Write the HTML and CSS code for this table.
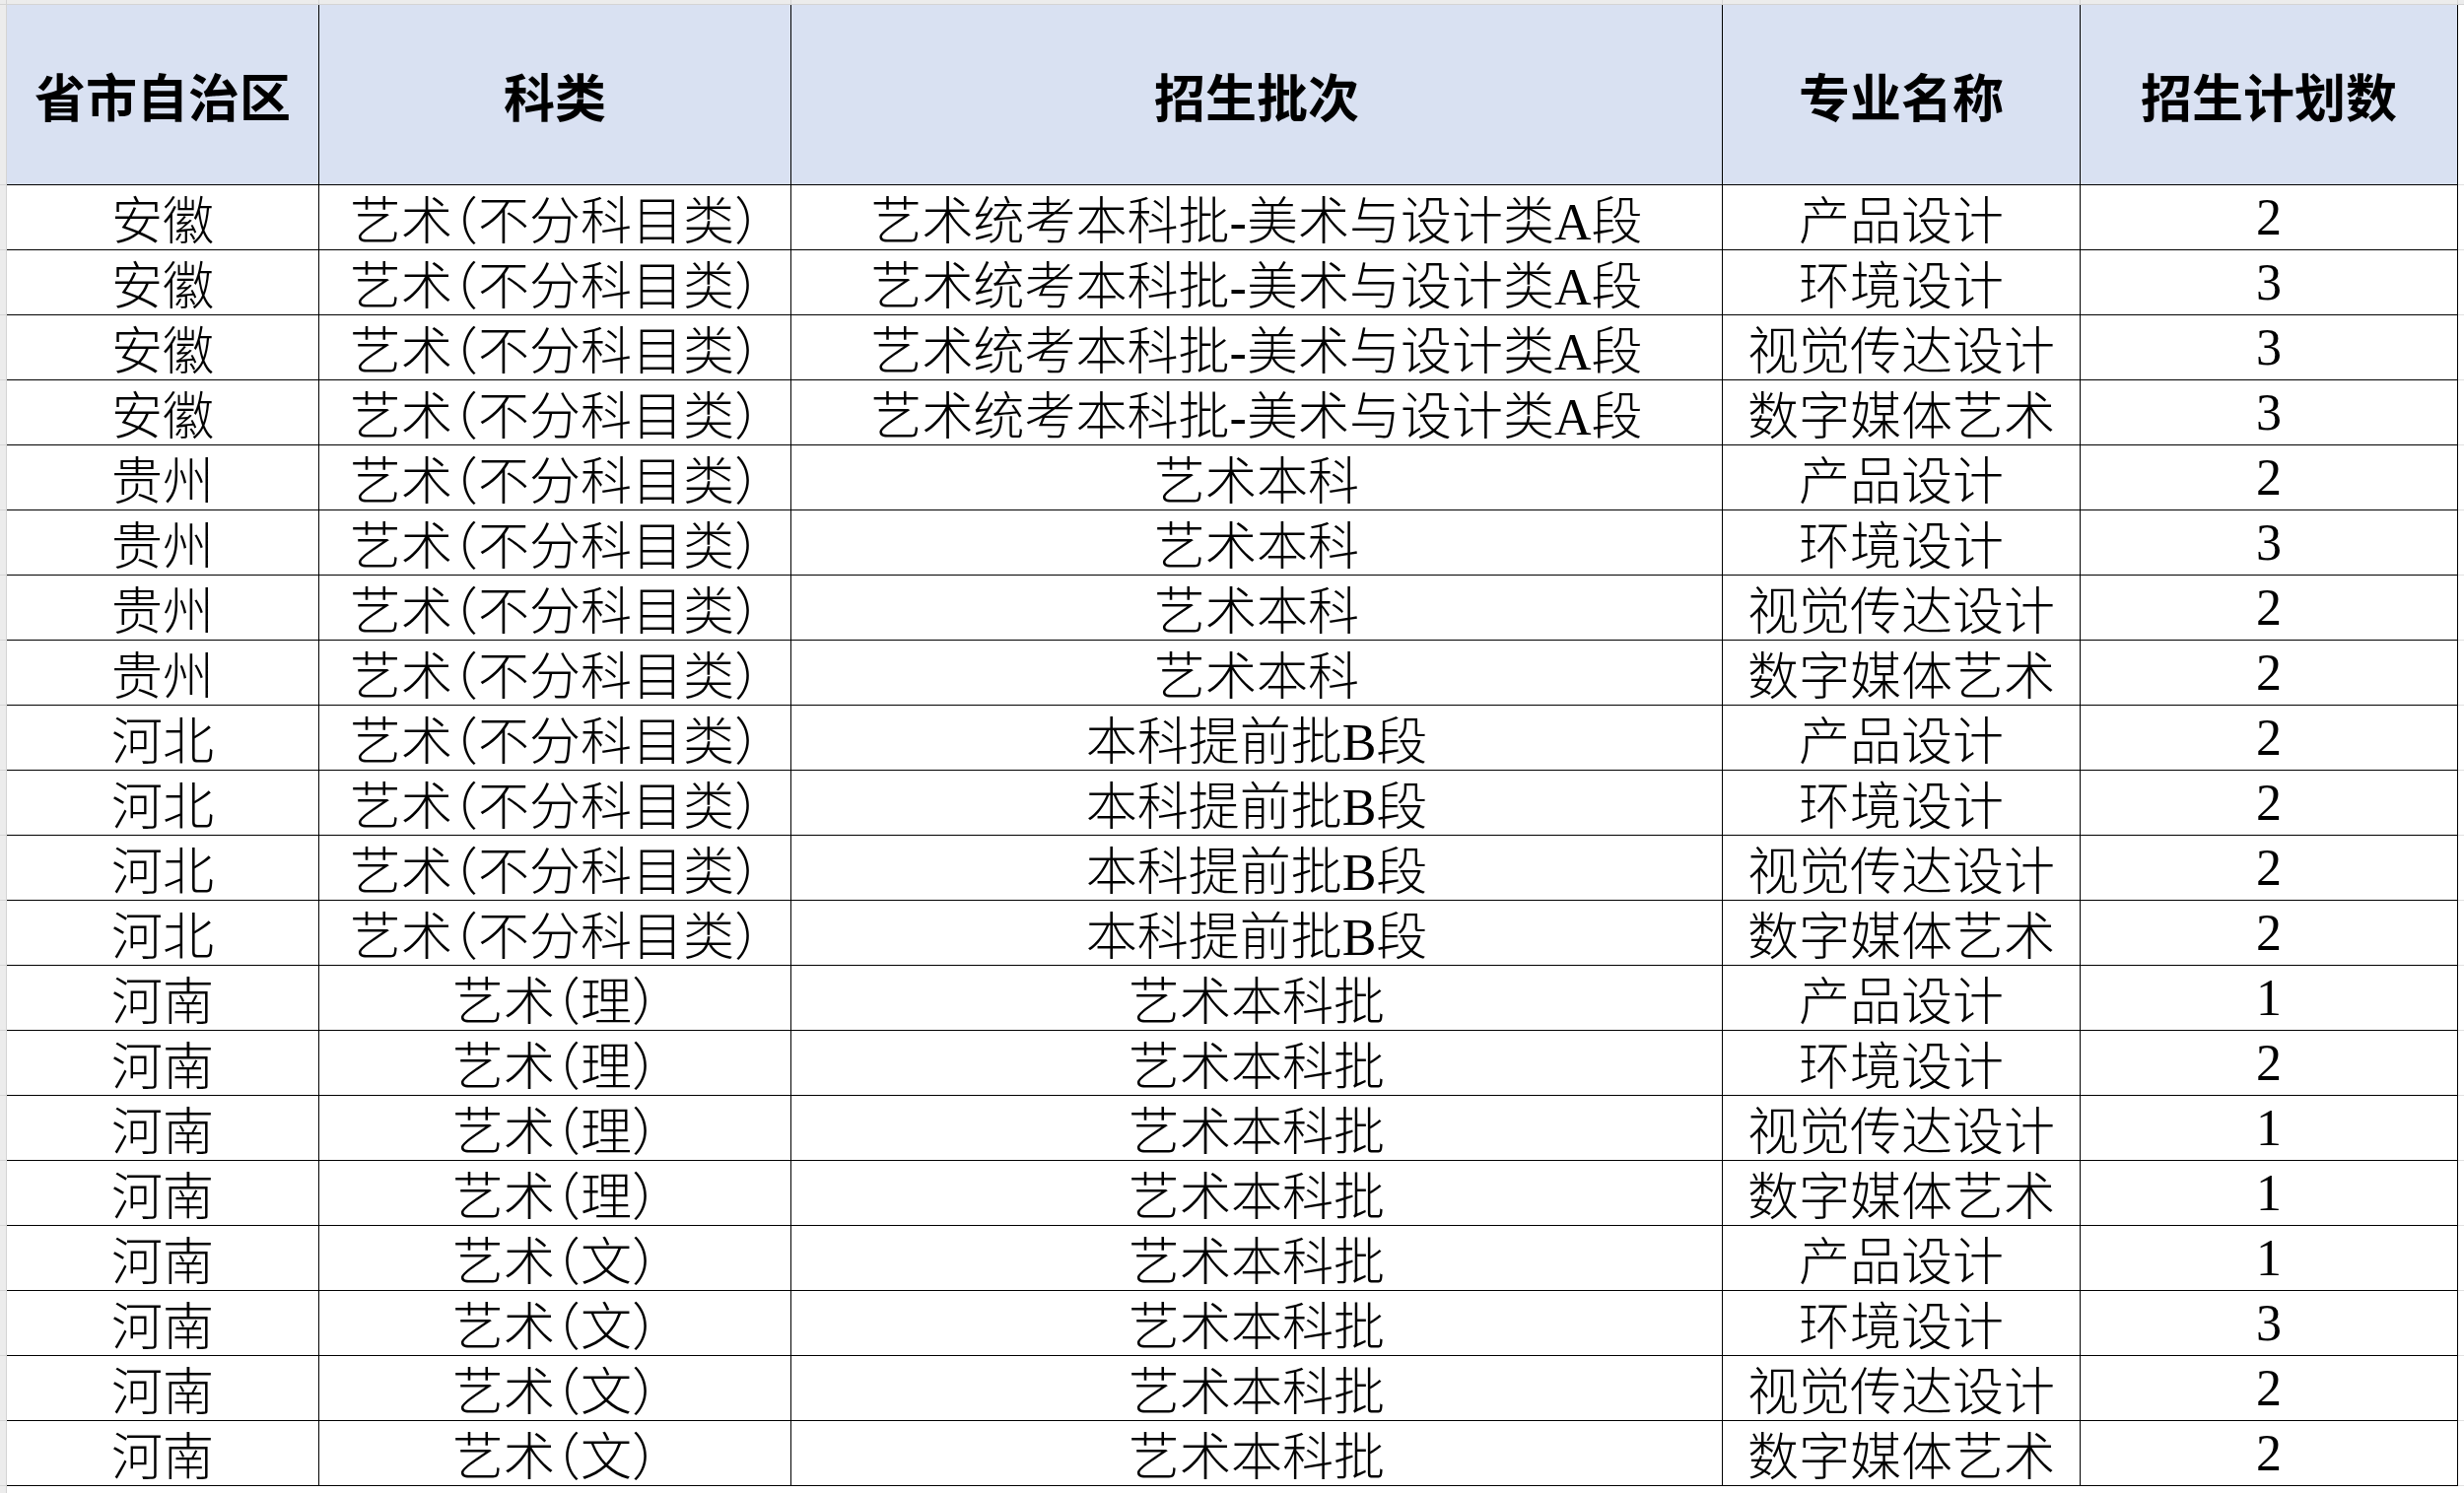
FILE: index.html
```html
<!DOCTYPE html>
<html lang="zh-CN">
<head>
<meta charset="utf-8">
<title>招生计划</title>
<link rel="stylesheet" href="styles.css">
</head>
<body>
<div class="sheet">
  <div class="gut corner"></div><div class="colhead"></div><div class="colhead"></div><div class="colhead"></div><div class="colhead"></div><div class="colhead"></div><div class="colhead filler"></div>

  <div class="gut"></div><div class="th">省市自治区</div><div class="th">科类</div><div class="th">招生批次</div><div class="th">专业名称</div><div class="th">招生计划数</div><div class="fill"></div>

  <div class="gut"></div><div class="td">安徽</div><div class="td">艺术（不分科目类）</div><div class="td">艺术统考本科批-美术与设计类A段</div><div class="td">产品设计</div><div class="td num">2</div><div class="fill"></div>
  <div class="gut"></div><div class="td">安徽</div><div class="td">艺术（不分科目类）</div><div class="td">艺术统考本科批-美术与设计类A段</div><div class="td">环境设计</div><div class="td num">3</div><div class="fill"></div>
  <div class="gut"></div><div class="td">安徽</div><div class="td">艺术（不分科目类）</div><div class="td">艺术统考本科批-美术与设计类A段</div><div class="td">视觉传达设计</div><div class="td num">3</div><div class="fill"></div>
  <div class="gut"></div><div class="td">安徽</div><div class="td">艺术（不分科目类）</div><div class="td">艺术统考本科批-美术与设计类A段</div><div class="td">数字媒体艺术</div><div class="td num">3</div><div class="fill"></div>

  <div class="gut"></div><div class="td">贵州</div><div class="td">艺术（不分科目类）</div><div class="td">艺术本科</div><div class="td">产品设计</div><div class="td num">2</div><div class="fill"></div>
  <div class="gut"></div><div class="td">贵州</div><div class="td">艺术（不分科目类）</div><div class="td">艺术本科</div><div class="td">环境设计</div><div class="td num">3</div><div class="fill"></div>
  <div class="gut"></div><div class="td">贵州</div><div class="td">艺术（不分科目类）</div><div class="td">艺术本科</div><div class="td">视觉传达设计</div><div class="td num">2</div><div class="fill"></div>
  <div class="gut"></div><div class="td">贵州</div><div class="td">艺术（不分科目类）</div><div class="td">艺术本科</div><div class="td">数字媒体艺术</div><div class="td num">2</div><div class="fill"></div>

  <div class="gut"></div><div class="td">河北</div><div class="td">艺术（不分科目类）</div><div class="td">本科提前批B段</div><div class="td">产品设计</div><div class="td num">2</div><div class="fill"></div>
  <div class="gut"></div><div class="td">河北</div><div class="td">艺术（不分科目类）</div><div class="td">本科提前批B段</div><div class="td">环境设计</div><div class="td num">2</div><div class="fill"></div>
  <div class="gut"></div><div class="td">河北</div><div class="td">艺术（不分科目类）</div><div class="td">本科提前批B段</div><div class="td">视觉传达设计</div><div class="td num">2</div><div class="fill"></div>
  <div class="gut"></div><div class="td">河北</div><div class="td">艺术（不分科目类）</div><div class="td">本科提前批B段</div><div class="td">数字媒体艺术</div><div class="td num">2</div><div class="fill"></div>

  <div class="gut"></div><div class="td">河南</div><div class="td">艺术（理）</div><div class="td">艺术本科批</div><div class="td">产品设计</div><div class="td num">1</div><div class="fill"></div>
  <div class="gut"></div><div class="td">河南</div><div class="td">艺术（理）</div><div class="td">艺术本科批</div><div class="td">环境设计</div><div class="td num">2</div><div class="fill"></div>
  <div class="gut"></div><div class="td">河南</div><div class="td">艺术（理）</div><div class="td">艺术本科批</div><div class="td">视觉传达设计</div><div class="td num">1</div><div class="fill"></div>
  <div class="gut"></div><div class="td">河南</div><div class="td">艺术（理）</div><div class="td">艺术本科批</div><div class="td">数字媒体艺术</div><div class="td num">1</div><div class="fill"></div>

  <div class="gut"></div><div class="td">河南</div><div class="td">艺术（文）</div><div class="td">艺术本科批</div><div class="td">产品设计</div><div class="td num">1</div><div class="fill"></div>
  <div class="gut"></div><div class="td">河南</div><div class="td">艺术（文）</div><div class="td">艺术本科批</div><div class="td">环境设计</div><div class="td num">3</div><div class="fill"></div>
  <div class="gut"></div><div class="td">河南</div><div class="td">艺术（文）</div><div class="td">艺术本科批</div><div class="td">视觉传达设计</div><div class="td num">2</div><div class="fill"></div>
  <div class="gut"></div><div class="td">河南</div><div class="td">艺术（文）</div><div class="td">艺术本科批</div><div class="td">数字媒体艺术</div><div class="td num">2</div><div class="fill"></div>

  <div class="gut end"></div><div class="blank"></div><div class="blank"></div><div class="blank"></div><div class="blank"></div><div class="blank"></div><div class="blank"></div>
</div>
</body>
</html>
```

FILE: styles.css
```css
html, body {
  margin: 0;
  padding: 0;
  background: #ffffff;
}

body {
  width: 2500px;
  height: 1515px;
  overflow: hidden;
  font-family: "Liberation Serif", "Noto Sans CJK SC", serif;
  color: #000000;
}

.sheet {
  display: grid;
  grid-template-columns: 7px 317px 479px 945px 363px 383px 1fr;
  grid-template-rows: 5px 183px repeat(20, 66px) 1fr;
  width: 2500px;
  height: 1515px;
}

.sheet > div {
  box-sizing: border-box;
}

.gut {
  background: #ececec;
  border-right: 1px solid #d4d4d4;
  border-bottom: 1px solid #d4d4d4;
}

.gut.end {
  border-bottom: none;
}

.colhead {
  background: #ececec;
  border-right: 1px solid #d4d4d4;
  border-bottom: 1px solid #d4d4d4;
}

.colhead.filler {
  border-right: none;
}

.th {
  display: flex;
  align-items: center;
  justify-content: center;
  background: #d9e1f2;
  border-right: 1px solid #000000;
  border-bottom: 1px solid #000000;
  font-family: "Noto Sans CJK SC", sans-serif;
  font-weight: 700;
  font-size: 52px;
  white-space: nowrap;
}

.td {
  display: flex;
  align-items: center;
  justify-content: center;
  border-right: 1px solid #000000;
  border-bottom: 1px solid #000000;
  font-size: 52px;
  font-weight: 300;
  font-feature-settings: "halt" 1;
  white-space: nowrap;
}

.num {
  font-size: 52px;
}

.fill {
  border-bottom: 1px solid #e0e0e0;
}

.blank {
  background: #ffffff;
}
```
